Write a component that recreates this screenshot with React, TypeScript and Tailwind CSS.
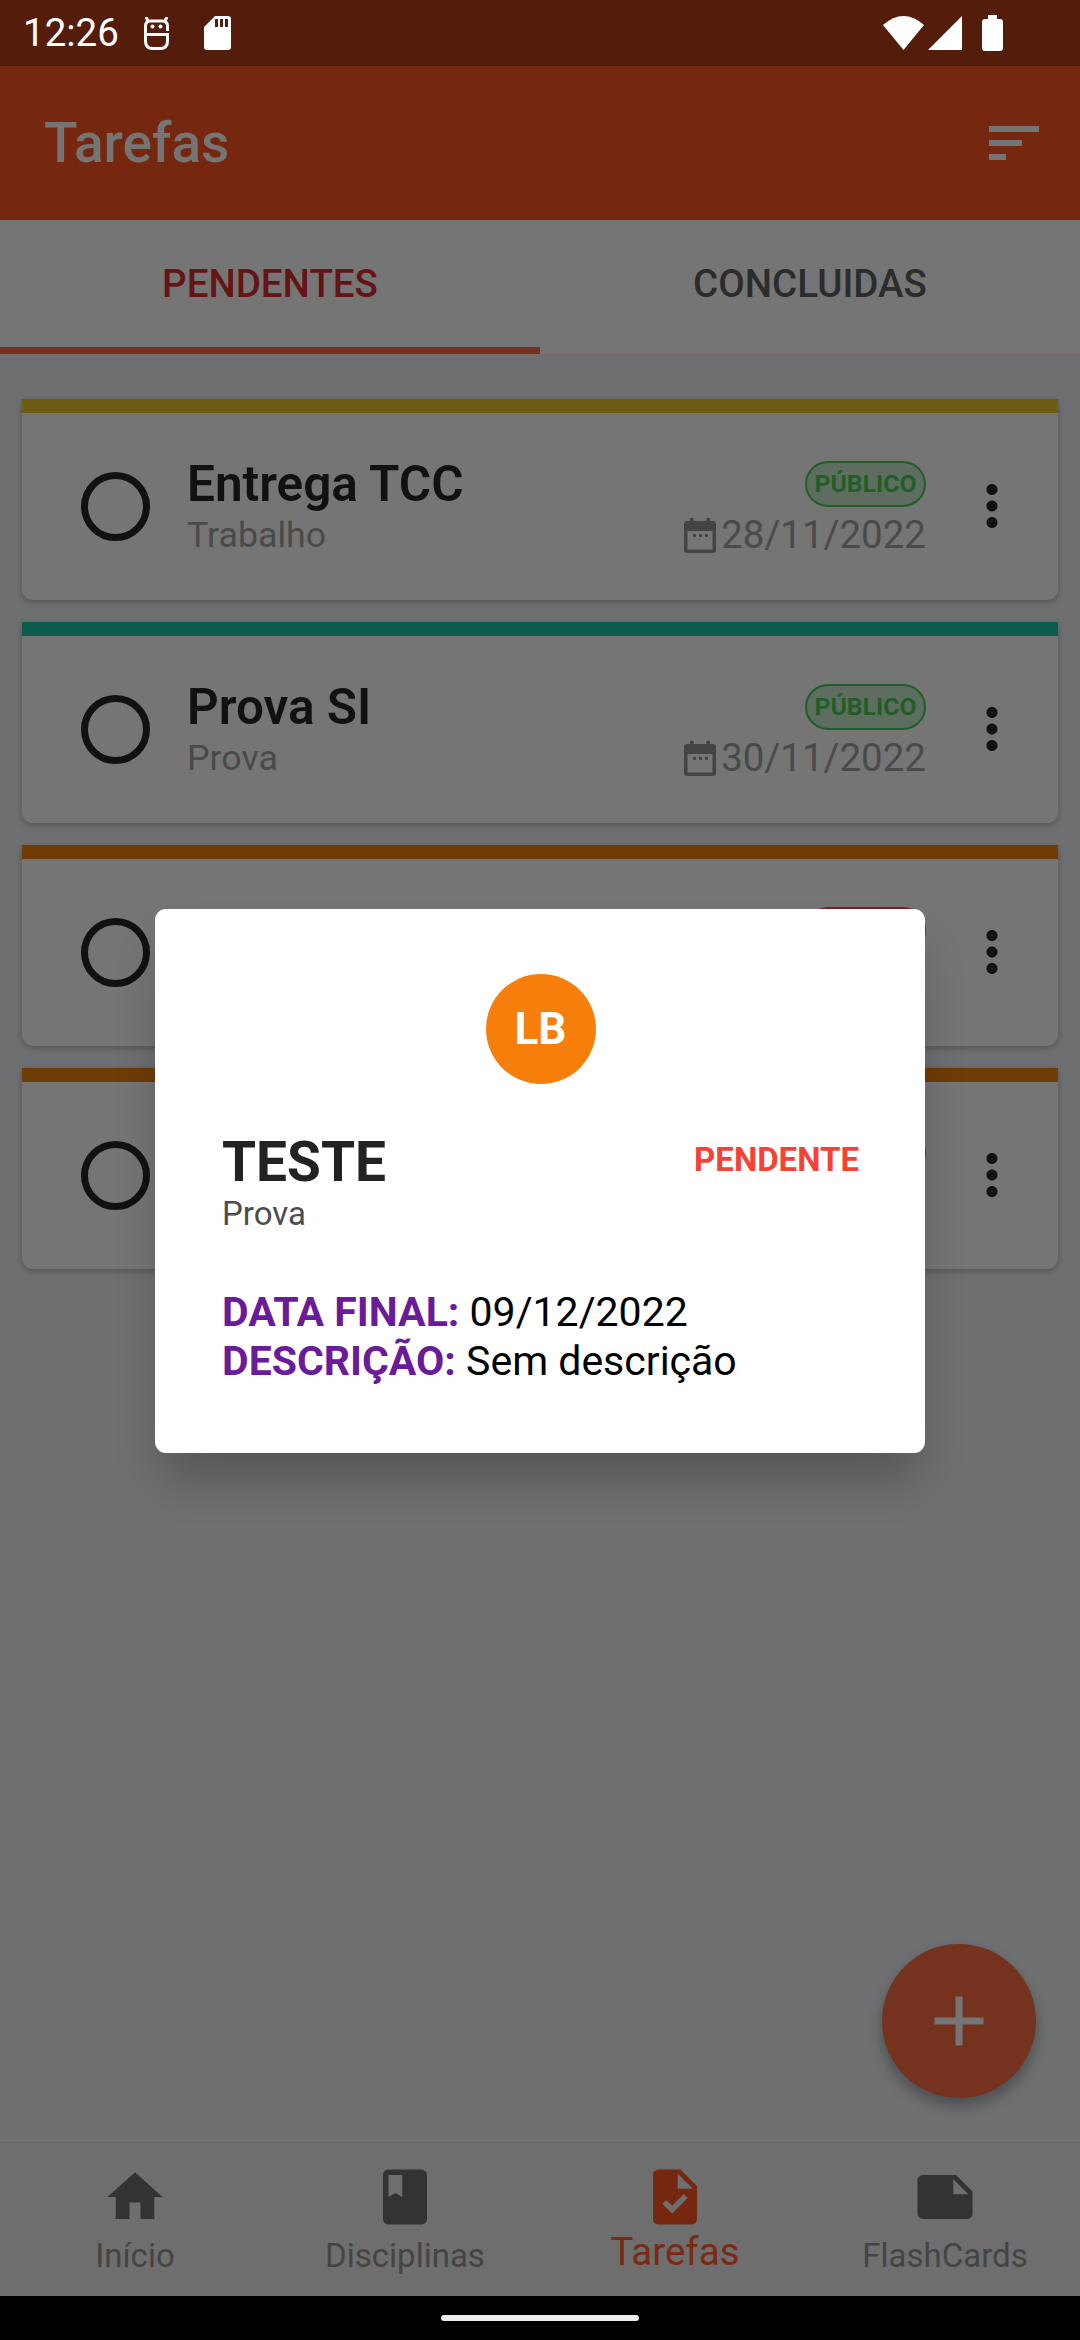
import { MdHome, MdBook, MdTask, MdNote, MdMoreVert, MdAdd } from 'react-icons/md'

const font = { fontFamily: 'Roboto, sans-serif' }

// the last two cards sit behind the dialog, only their badge edge shows
const tasks = [
  { title: 'Entrega TCC', kind: 'Trabalho', date: '28/11/2022', stripe: 'bg-[#6c5c12]', badge: 'PÚBLICO', priv: false },
  { title: 'Prova SI', kind: 'Prova', date: '30/11/2022', stripe: 'bg-[#0b5c4c]', badge: 'PÚBLICO', priv: false },
  { title: '', kind: '', date: '', stripe: 'bg-[#703c06]', badge: '', priv: true },
  { title: '', kind: '', date: '', stripe: 'bg-[#703c06]', badge: '', priv: false },
]

const CalendarIcon = () => (
  <svg width="32" height="35" viewBox="0 0 32 35" className="shrink-0" fill="#444">
    <rect x="6" y="0" width="3.500" height="6" />
    <rect x="22.500" y="0" width="3.500" height="6" />
    <path
      fillRule="evenodd"
      d="M3 3h26a3 3 0 0 1 3 3v26a3 3 0 0 1-3 3H3a3 3 0 0 1-3-3V6a3 3 0 0 1 3-3zM3.500 13v18.500h25V13z"
    />
    <rect x="9" y="16" width="3" height="3" />
    <rect x="15" y="16" width="3" height="3" />
    <rect x="21" y="16" width="3" height="3" />
  </svg>
)

const TaskCard = ({ task }: { task: (typeof tasks)[number] }) => (
  <div className="h-[201px] rounded-b-[11px] bg-[#757575] shadow-[0_2px_6px_rgba(0,0,0,0.25)]">
    <div className={`h-[14px] ${task.stripe}`} />
    <div className="flex h-[187px] items-center pl-[59px] pr-[33px]">
      <div className="mb-[1px] h-[69px] w-[69px] shrink-0 rounded-full border-[7px] border-[#111]" />
      <div className="mb-[3px] ml-[37px] flex-1">
        <div className="text-[49.5px] font-semibold leading-[56px] text-[#111]">{task.title}</div>
        <div className="mt-[4px] text-[35.75px] leading-[38px] text-[#4a4a4a]">{task.kind}</div>
      </div>
      <div className="mt-[3px] flex flex-col items-end">
        <div
          className={
            task.priv
              ? 'flex h-[46px] w-[121px] items-center justify-center rounded-full border-[2px] border-[#7d1f1f] bg-[#7d1f1f]'
              : 'flex h-[46px] w-[121px] items-center justify-center rounded-full border-[2px] border-[#1f5f27] bg-[#5f6d60] text-[24.75px] font-bold text-[#1f5f27]'
          }
        >
          {task.badge}
        </div>
        <div className="mt-[8px] flex h-[40px] items-center text-[38.5px] leading-[40px] text-[#4a4a4a]">
          {task.date && <CalendarIcon />}
          {task.date && <span className="ml-[5px]">{task.date}</span>}
        </div>
      </div>
      <MdMoreVert className="mb-[1px] ml-[33px] shrink-0 text-[#111]" size={66} />
    </div>
  </div>
)

const navItems = [
  { label: 'Início', Icon: MdHome, active: false },
  { label: 'Disciplinas', Icon: MdBook, active: false },
  { label: 'Tarefas', Icon: MdTask, active: true },
  { label: 'FlashCards', Icon: MdNote, active: false },
]

const App = () => {
  return (
    <div className="relative flex h-[2340px] w-[1080px] flex-col overflow-hidden bg-[#6e6f71]" style={font}>
      {/* status bar */}
      <div className="flex h-[66px] shrink-0 items-center bg-[#541d0b] pl-[23px] pr-[77px] text-white">
        <span className="text-[38.5px] leading-none">12:26</span>
        <svg width="25" height="33" viewBox="0 0 25 33" className="ml-[25px]" fill="none" stroke="#fff" strokeWidth="3">
          <path d="M2 0l2 4M23 0l-2 4M1.500 17V9q0-5 5-5h12q5 0 5 5v5M0 17.500h25M1.500 18v6q0 7.500 7.500 7.500h7q7.500 0 7.500-7.500v-6" />
          <circle cx="8.500" cy="9.500" r="2" fill="#fff" stroke="none" />
          <circle cx="16.500" cy="9.500" r="2" fill="#fff" stroke="none" />
        </svg>
        <svg width="27" height="34" viewBox="0 0 27 34" className="ml-[35px]" fill="#fff">
          <path
            fillRule="evenodd"
            d="M11 0h13a3 3 0 0 1 3 3v28a3 3 0 0 1-3 3H3a3 3 0 0 1-3-3V11zM11 3v8h3V3zM16 3v8h3V3zM21 3v8h3V3z"
          />
        </svg>
        <div className="ml-auto flex items-center">
          <svg width="41" height="34" viewBox="0 0 41 34" fill="#fff">
            <path d="M0 9Q20.500-9 41 9L20.500 34z" />
          </svg>
          <svg width="34" height="34" viewBox="0 0 34 34" fill="#fff" className="ml-[4px]">
            <path d="M34 0v34H0z" />
          </svg>
          <svg width="21" height="36" viewBox="0 0 21 36" fill="#fff" className="ml-[20px]">
            <path d="M6 0h9v4h3a3 3 0 0 1 3 3v26a3 3 0 0 1-3 3H3a3 3 0 0 1-3-3V7a3 3 0 0 1 3-3h3z" />
          </svg>
        </div>
      </div>

      {/* app bar */}
      <div className="flex h-[154px] shrink-0 items-center justify-between bg-[#75280f] pl-[44px] pr-[41px]">
        <span className="text-[55px] font-medium text-[#757575]">Tarefas</span>
        <div className="flex flex-col gap-[8px]">
          <div className="h-[6px] w-[50px] bg-[#757575]" />
          <div className="h-[6px] w-[33px] bg-[#757575]" />
          <div className="h-[6px] w-[17px] bg-[#757575]" />
        </div>
      </div>

      {/* tabs */}
      <div className="flex h-[135px] shrink-0 border-b-[1px] border-[#7a6a64] bg-[#757575]">
        <div className="flex w-1/2 items-center justify-center border-b-[7px] border-[#75301e] text-[38.5px] font-medium text-[#641414]">
          PENDENTES
        </div>
        <div className="flex w-1/2 items-center justify-center border-b-[7px] border-transparent text-[38.5px] font-medium text-[#2c2c2c]">
          CONCLUIDAS
        </div>
      </div>

      {/* task list */}
      <div className="flex flex-1 flex-col gap-[22px] px-[22px] pt-[44px]">
        {tasks.map((t, i) => (
          <TaskCard key={i} task={t} />
        ))}
      </div>

      {/* bottom nav */}
      <div className="flex h-[154px] shrink-0 border-t-[1px] border-[#666] bg-[#6e6e6e]">
        {navItems.map(({ label, Icon, active }) => (
          <div
            key={label}
            className={active ? 'flex flex-1 flex-col items-center pt-[21px] text-[#75280f]' : 'flex flex-1 flex-col items-center pt-[21px] text-[#333]'}
          >
            <Icon size={66} />
            <span
              className={
                active
                  ? 'mt-[1px] text-[38.5px] leading-[42px] text-[#7a2a12]'
                  : 'mt-[5px] text-[33px] leading-[42px] text-[#444]'
              }
            >
              {label}
            </span>
          </div>
        ))}
      </div>

      {/* gesture bar */}
      <div className="flex h-[44px] shrink-0 items-center justify-center bg-black">
        <div className="h-[6px] w-[198px] rounded-full bg-[#eee]" />
      </div>

      {/* fab */}
      <div className="absolute left-[882px] top-[1944px] flex h-[154px] w-[154px] items-center justify-center rounded-full bg-[#75321e] shadow-[0_8px_14px_rgba(0,0,0,0.3)]">
        <MdAdd className="text-[#757575]" size={84} />
      </div>

      {/* dialog */}
      <div className="absolute left-[155px] top-[909px] h-[544px] w-[770px] rounded-[11px] bg-white pl-[67px] pr-[66px] pt-[65px] shadow-[0_32px_48px_-8px_rgba(0,0,0,0.24)]">
        <div className="flex justify-center">
          <div className="flex h-[110px] w-[110px] items-center justify-center rounded-full bg-[#f57f0a] text-[44px] font-bold text-white">
            LB
          </div>
        </div>
        <div className="mt-[45px] flex items-start justify-between">
          <div>
            <div className="text-[55px] font-bold leading-[66px] text-[#222]">TESTE</div>
            <div className="text-[33px] leading-[38px] text-[#4d4d4d]">Prova</div>
          </div>
          <div className="mt-[11px] text-[33px] font-bold leading-[40px] text-[#f44336]">PENDENTE</div>
        </div>
        <div className="mt-[55px] text-[41px] leading-[49px] text-black">
          <div>
            <span className="font-bold text-[#6a1b9a]">DATA FINAL:</span> 09/12/2022
          </div>
          <div>
            <span className="font-bold text-[#6a1b9a]">DESCRIÇÃO:</span> Sem descrição
          </div>
        </div>
      </div>
    </div>
  )
}

export default App
